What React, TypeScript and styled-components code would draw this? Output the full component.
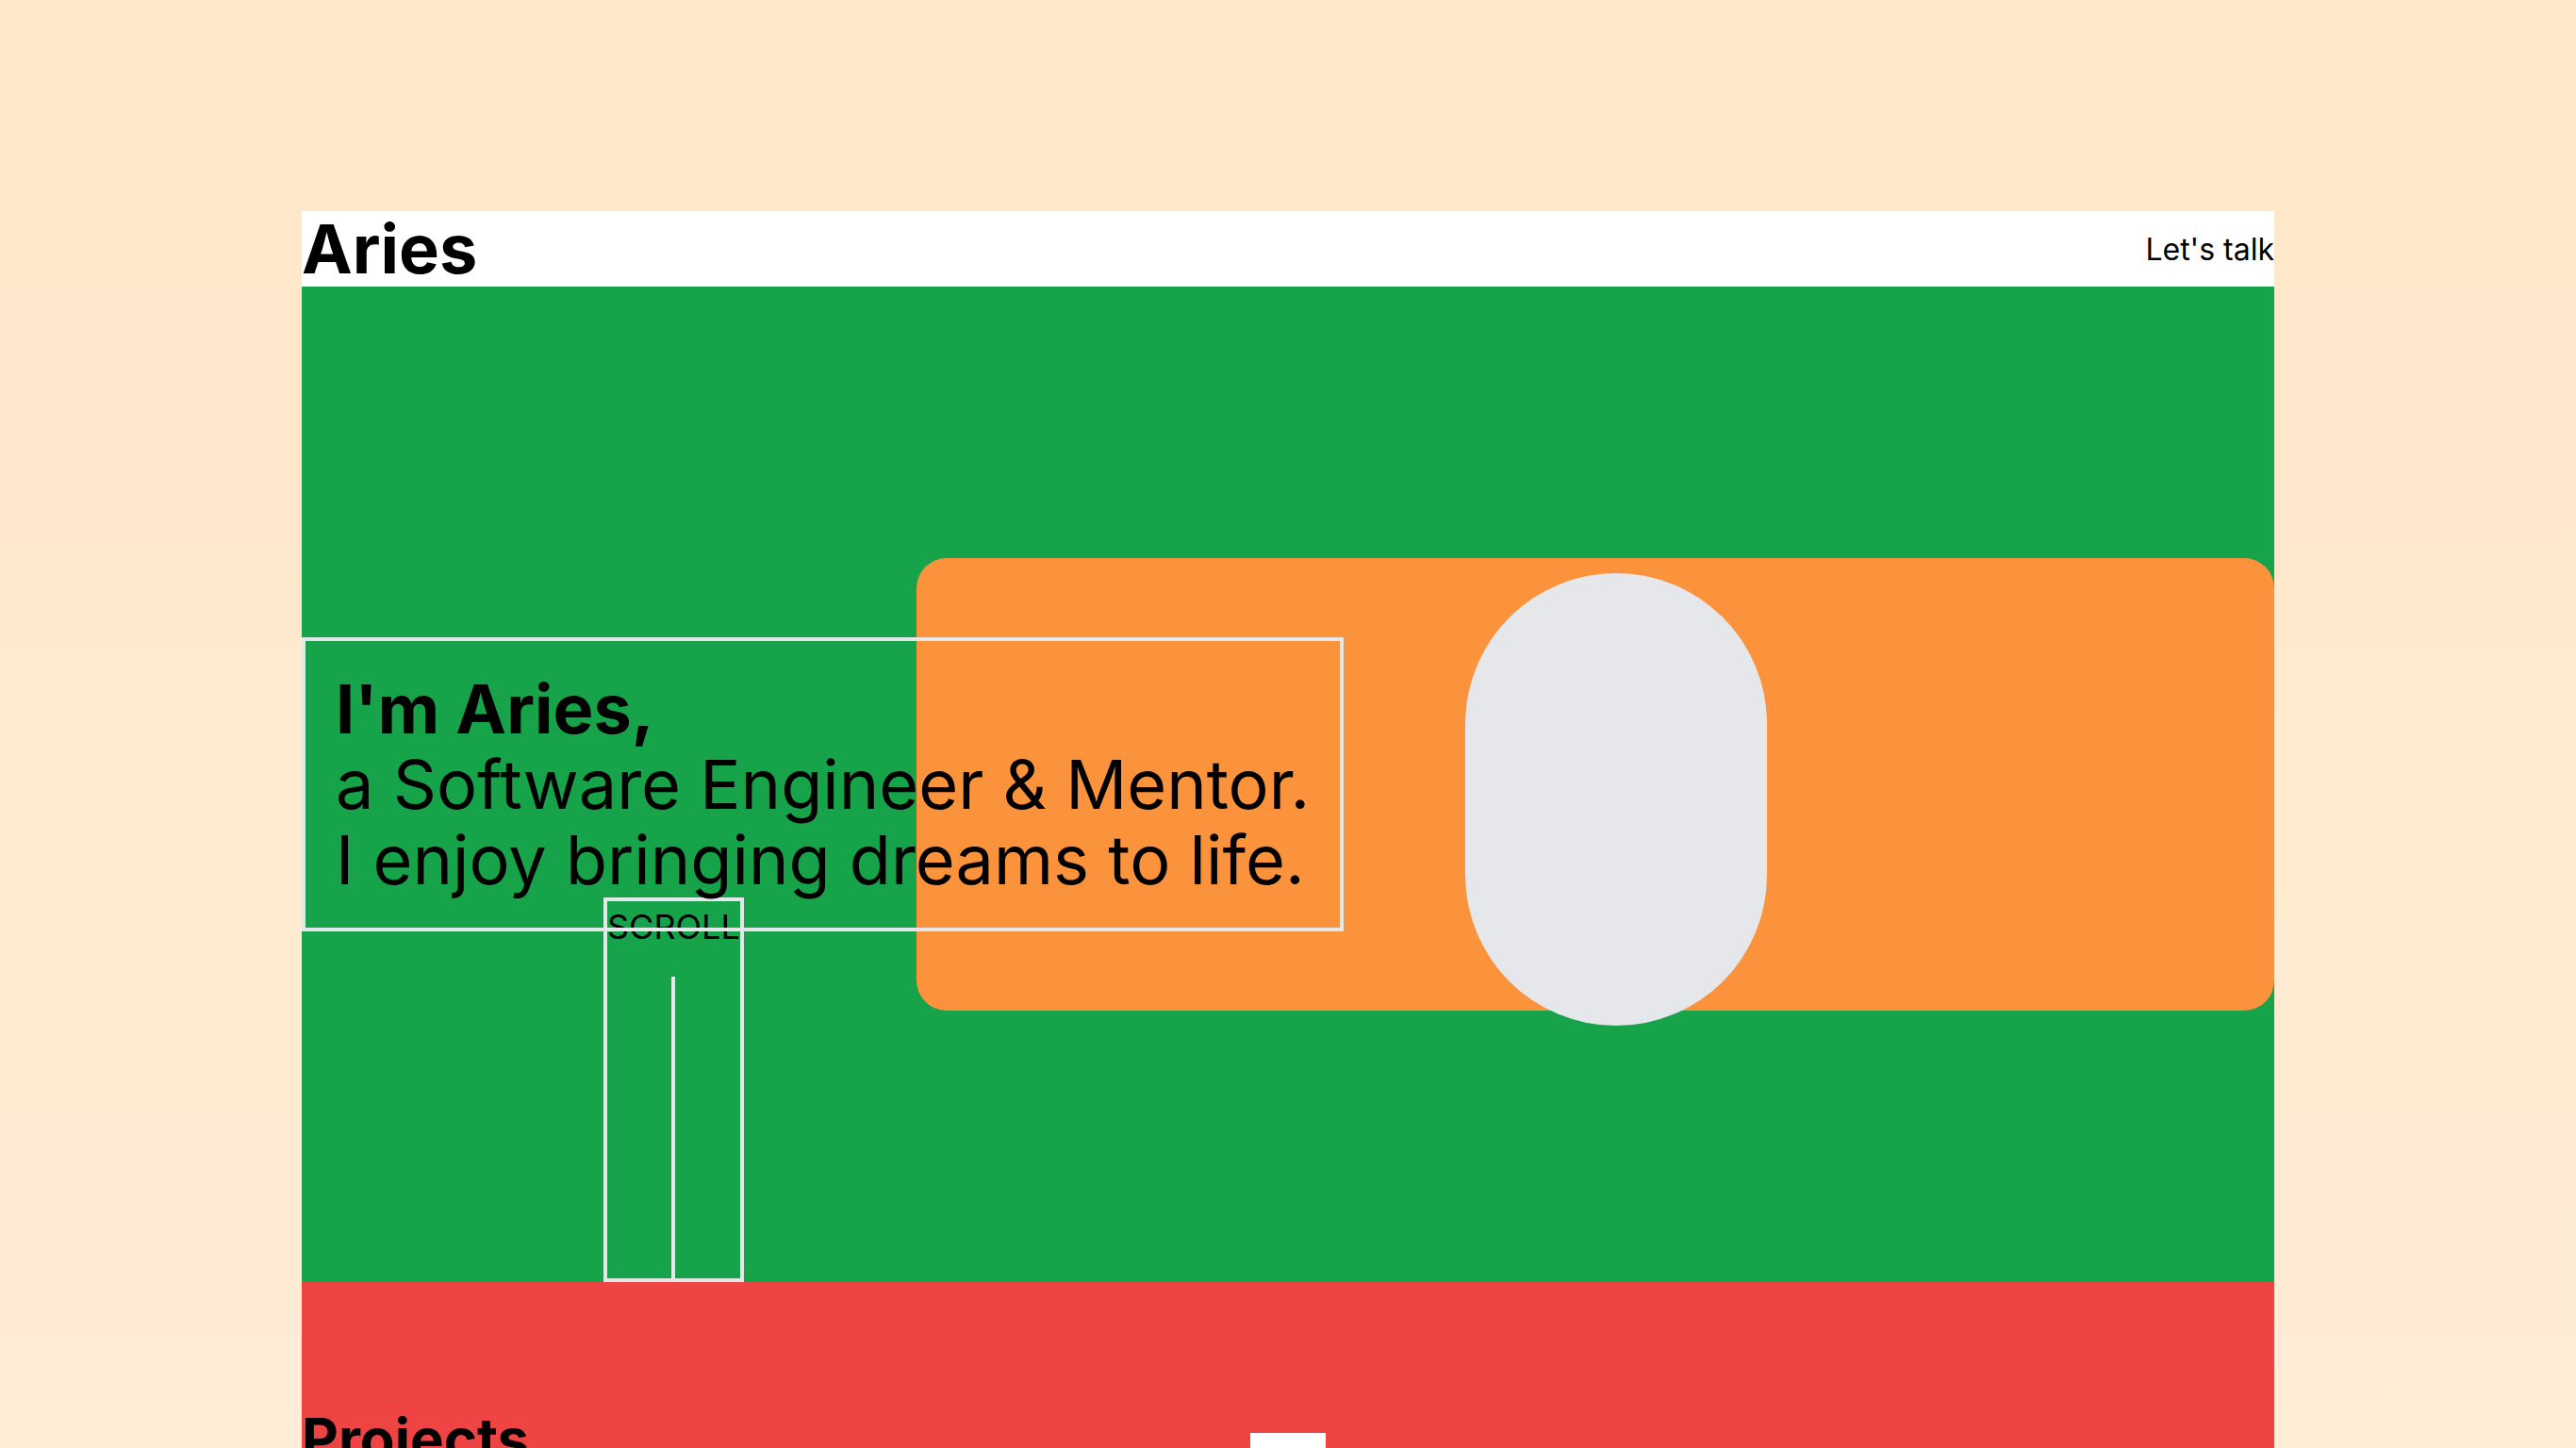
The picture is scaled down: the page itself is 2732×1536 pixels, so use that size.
import React from 'react';
import styled, { createGlobalStyle } from 'styled-components';

const GlobalStyle = createGlobalStyle`
  *, *::before, *::after {
    box-sizing: border-box;
  }

  html, body {
    margin: 0;
    padding: 0;
  }

  body {
    min-height: 100vh;
    font-family: Inter, 'Liberation Sans', sans-serif;
    line-height: 1.5;
    color: #000;
    background: linear-gradient(180deg, #ffe7c8 0%, #ffeedc 100%);
  }

  h1, h2, p {
    margin: 0;
  }
`;

export default function App() {
  return (
    <Page>
      <GlobalStyle />
      <Container>
        <Header>
          <Logo>Aries</Logo>
          <TalkLink href='#'>Let's talk</TalkLink>
        </Header>

        <Hero>
          <Intro>
            <strong>I'm Aries,</strong>
            <br />
            a Software Engineer &amp; Mentor.
            <br />
            I enjoy bringing dreams to life.
          </Intro>
          <Card>
            <Portrait />
          </Card>
          <Scroll>
            <ScrollLabel>SCROLL</ScrollLabel>
            <ScrollLine />
          </Scroll>
        </Hero>

        <Projects>
          <ProjectsHead>
            <SectionTitle>Projects</SectionTitle>
            <Marker />
          </ProjectsHead>
        </Projects>
      </Container>
    </Page>
  );
}

const Page = styled.div`
  padding-top: 224px;
  min-height: 100vh;
`;

const Container = styled.main`
  width: 2092px;
  margin: 0 auto;
`;

const Header = styled.header`
  height: 80px;
  display: flex;
  align-items: center;
  justify-content: space-between;
  background: #fff;
`;

const Logo = styled.h1`
  font-size: 72px;
  font-weight: 700;
  line-height: 80px;
`;

const TalkLink = styled.a`
  padding-top: 2px;
  font-size: 32px;
  color: #000;
  text-decoration: none;
`;

const Hero = styled.section`
  position: relative;
  height: 1056px;
  display: grid;
  align-items: center;
  background: #16a34a;
`;

const Intro = styled.p`
  grid-area: 1 / 1;
  justify-self: start;
  position: relative;
  z-index: 1;
  width: fit-content;
  padding: 32px;
  border: 4px solid #e5e7eb;
  font-size: 72px;
  line-height: 80px;
  white-space: nowrap;

  & > strong {
    font-weight: 700;
  }
`;

const Card = styled.div`
  grid-area: 1 / 1;
  justify-self: end;
  position: relative;
  width: 1440px;
  height: 480px;
  border-radius: 32px;
  background: #fb923c;
`;

const Portrait = styled.div`
  position: absolute;
  top: 16px;
  left: 582px;
  width: 320px;
  height: 480px;
  border-radius: 160px;
  background: #e5e7eb;
`;

const Scroll = styled.div`
  position: absolute;
  left: 320px;
  bottom: 0;
  height: 408px;
  display: flex;
  flex-direction: column;
  align-items: center;
  border: 4px solid #e5e7eb;
`;

const ScrollLabel = styled.span`
  font-size: 36px;
  line-height: 54px;
`;

const ScrollLine = styled.span`
  flex: 1;
  width: 4px;
  margin-top: 26px;
  background: #e5e7eb;
`;

const Projects = styled.section`
  padding-top: 136px;
  min-height: 800px;
  background: #ef4444;
`;

const ProjectsHead = styled.div`
  display: grid;
  grid-template-columns: 1fr 80px 1fr;
  align-items: start;
`;

const SectionTitle = styled.h2`
  font-size: 60px;
  font-weight: 700;
  line-height: 60px;
`;

const Marker = styled.div`
  height: 120px;
  margin-top: 24px;
  background: #fff;
`;
